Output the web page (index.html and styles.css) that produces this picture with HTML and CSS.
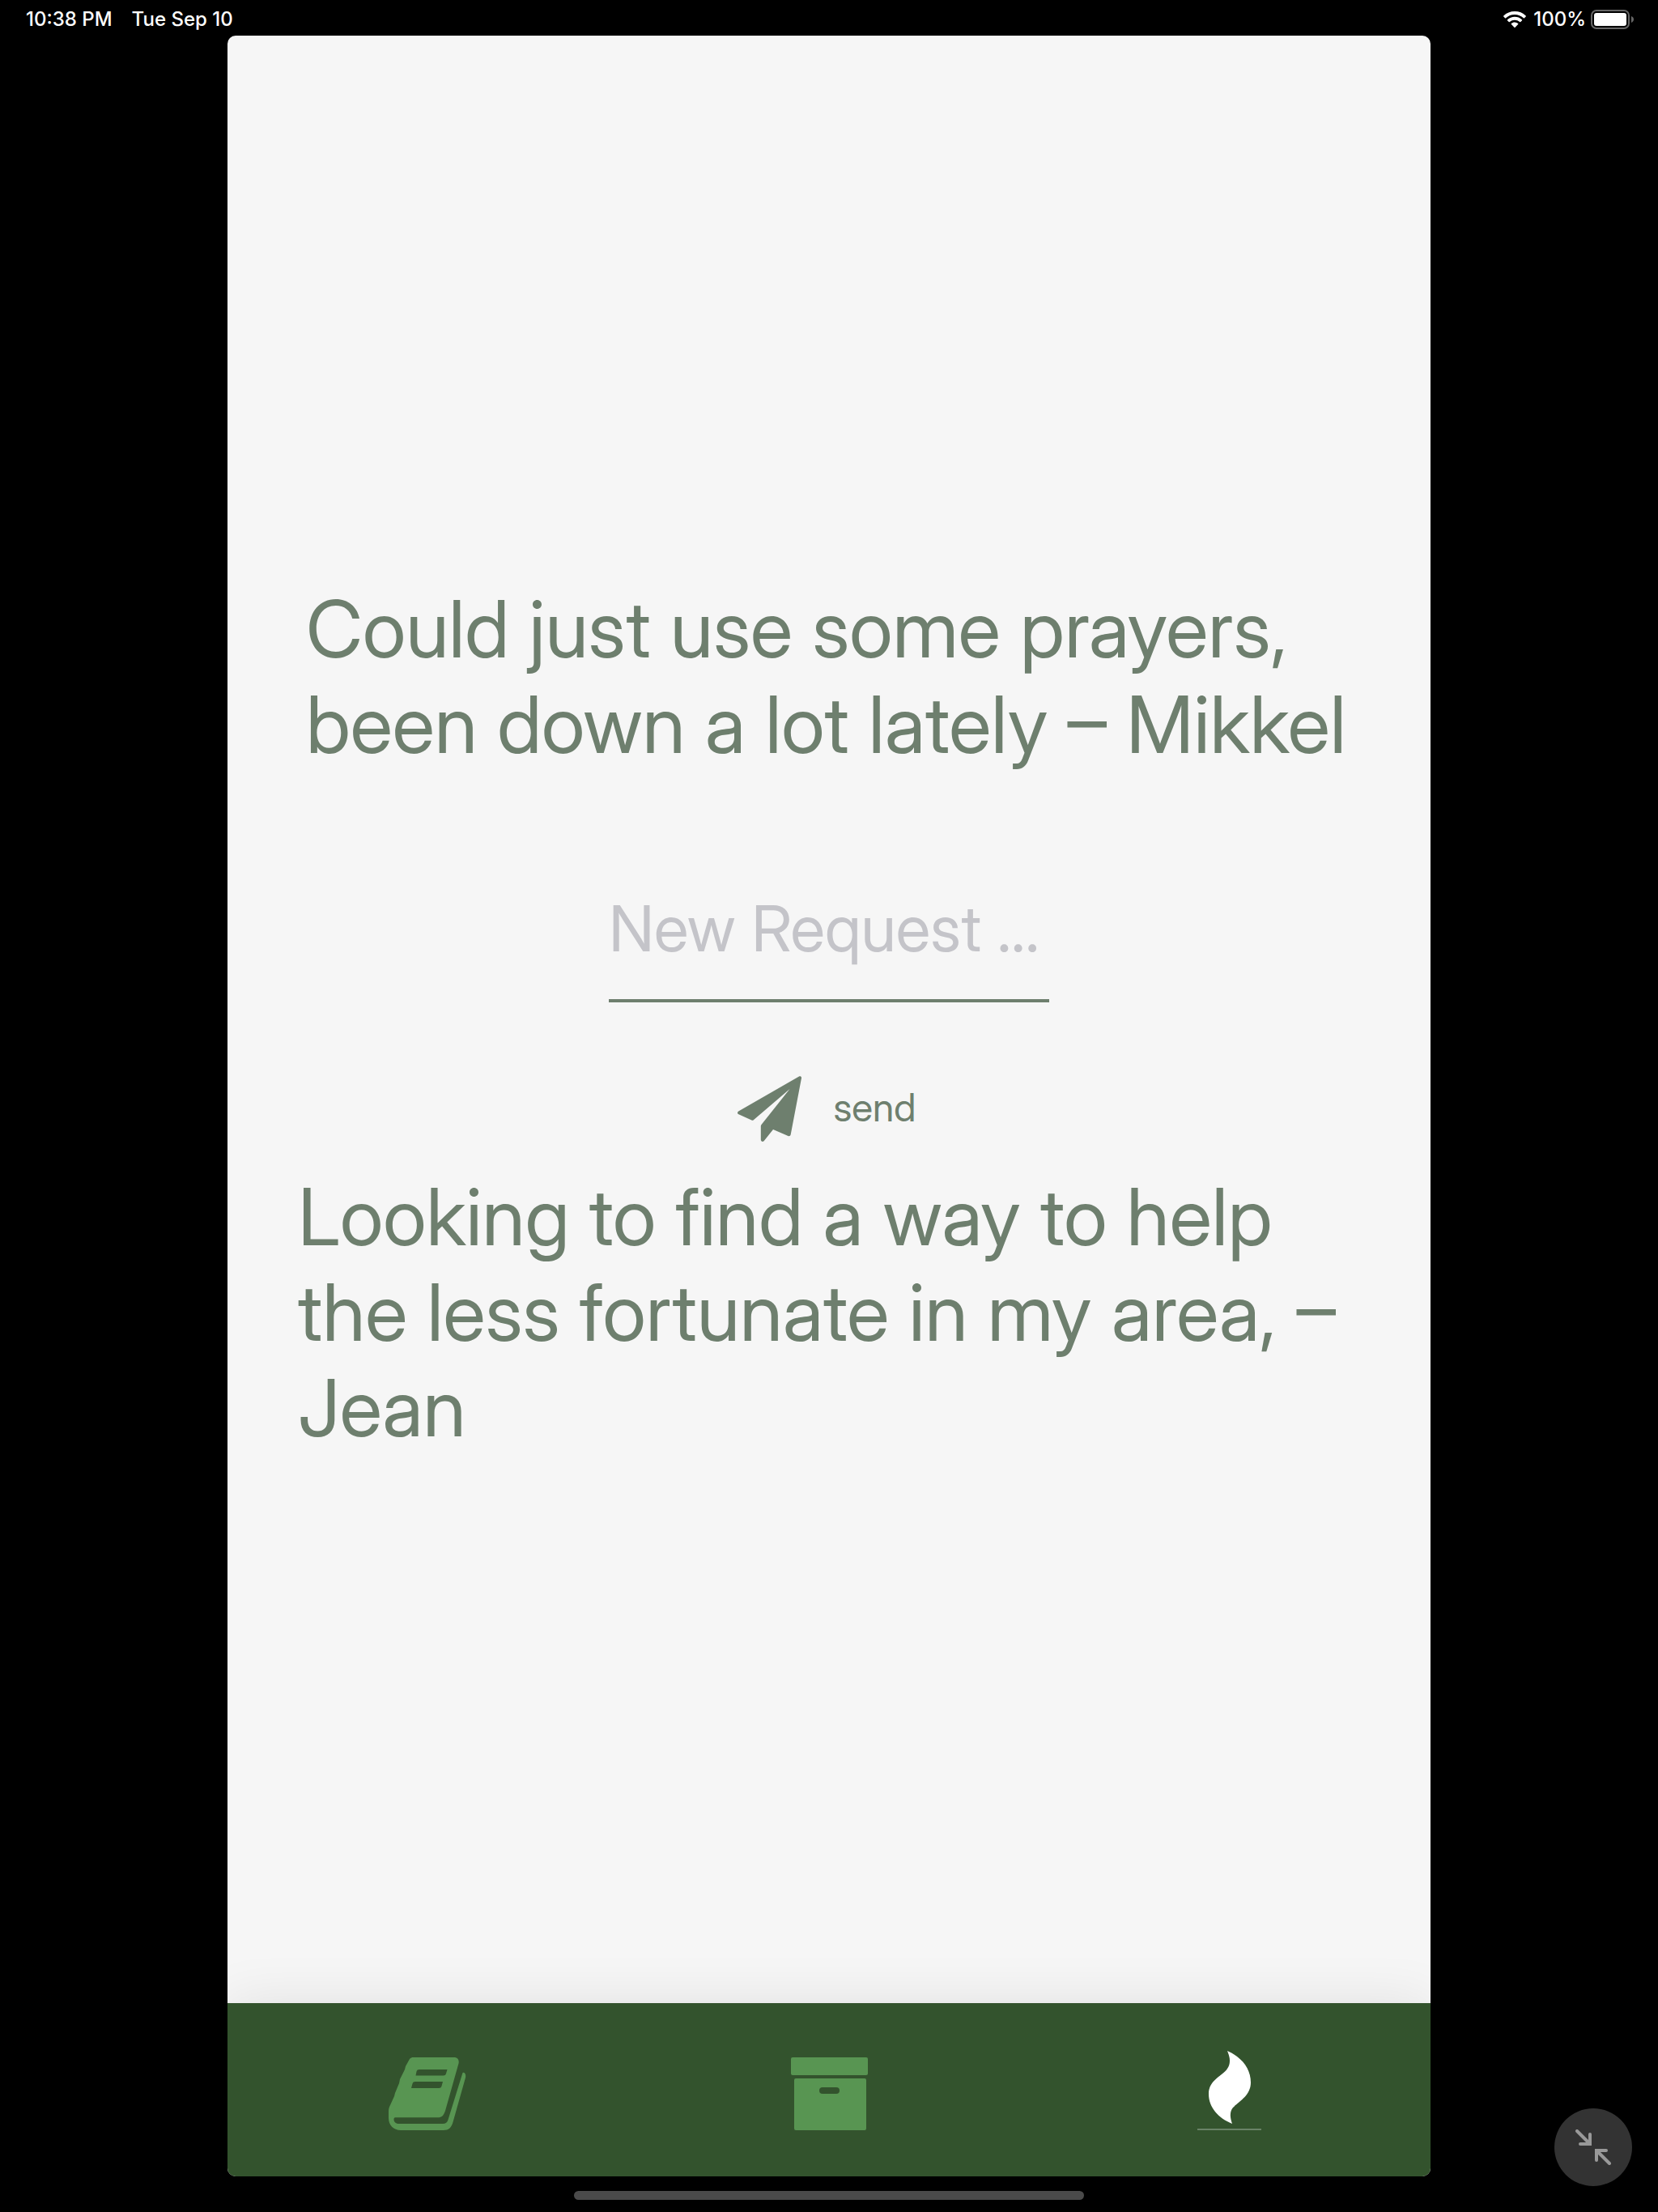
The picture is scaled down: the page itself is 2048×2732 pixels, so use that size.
FILE: index.html
```html
<!DOCTYPE html>
<html lang="en">
<head>
<meta charset="utf-8">
<meta name="viewport" content="width=device-width, initial-scale=1">
<title>Requests</title>
<link rel="stylesheet" href="styles.css">
</head>
<body>
<header class="status">
  <div class="status-group status-left">
    <time>10:38 PM</time>
    <time>Tue Sep 10</time>
  </div>
  <div class="status-group status-right">
    <svg class="wifi" viewBox="0 0 28 20" aria-hidden="true">
      <path d="M14 0C8.700 0 3.900 2 .300 5.400a.8.8 0 0 0 0 1.100l1.700 1.700a.8.8 0 0 0 1.100 0A15.800 15.800 0 0 1 14 3.900c4.200 0 8 1.600 10.900 4.300a.8.8 0 0 0 1.100 0l1.700-1.700a.8.8 0 0 0 0-1.100A19.900 19.900 0 0 0 14 0z"/>
      <path d="M14 6.800c-3.400 0-6.500 1.300-8.900 3.400a.8.8 0 0 0 0 1.200l1.600 1.600a.8.8 0 0 0 1.100 0 9.300 9.300 0 0 1 12.400 0 .8.8 0 0 0 1.100 0l1.600-1.600a.8.8 0 0 0 0-1.200A13.400 13.400 0 0 0 14 6.800z"/>
      <path d="M14 13.400c-1.600 0-3 .6-4.100 1.500a.8.8 0 0 0 0 1.200l3.500 3.600a.8.8 0 0 0 1.200 0l3.500-3.600a.8.8 0 0 0 0-1.200A6.500 6.500 0 0 0 14 13.400z"/>
    </svg>
    <span>100%</span>
    <svg class="battery" viewBox="0 0 53 24" aria-hidden="true">
      <rect x="1" y="1" width="46" height="22" rx="6" fill="none" stroke="#666" stroke-width="2"/>
      <rect x="4" y="4" width="40" height="16" rx="3"/>
      <path d="M50 8c2 .8 3 2.200 3 4s-1 3.200-3 4z" fill="#666"/>
    </svg>
  </div>
</header>

<div class="stage">
  <div class="app">
    <main class="feed">
      <p class="message message-first">Could just use some prayers, been down a lot lately – Mikkel</p>
      <form class="composer">
        <input class="request" type="text" placeholder="New Request ..." aria-label="New request">
        <button class="send" type="button">
          <svg class="send-icon" viewBox="0 0 79 81" aria-hidden="true">
            <path d="M76 .5L1.200 43.500c-1.600 1-1.600 3 .2 3.800l16 7.300c.9.4 1.700.3 2.400-.4L64.500 16 29.500 60c-.5.7-.7 1.300-.7 2v16.500c0 2.500 2.600 3.100 4 1.500L44 66l18.500 8c1.500.6 3-.2 3.200-1.800L79 2.500C79.200.5 77.500-.4 76 .5z"/>
          </svg>
          <span class="send-label">send</span>
        </button>
      </form>
      <p class="message">Looking to find a way to help the less fortunate in my area, – Jean</p>
    </main>

    <nav class="tabs" aria-label="Main">
      <a class="tab" href="#journal" aria-label="Journal">
        <svg class="tab-icon" viewBox="1 0 96 90" aria-hidden="true">
          <path fill-rule="evenodd" d="M30 0h51c4 0 6.500 3 5.500 7.500L70 66c-2 6-4.500 8.300-9 8.300H8c-2.500 0-2.500 7.700 5 7.700h54c3.500 0 5.500-1.500 6.500-5L91.500 19c2.500-1 4.300 2 3.500 6L79.500 80c-2 7-5.500 10-11.500 10H15C6 90 0 83.500 0 75V66c0-3 1-5 2-7l5-11 1-4 5-12 1-5 6-12 1-4 5-9c1-1 2-2 4-2zM38 15c-2 0-3 .8-3.500 2.500l-1 5h34c2 0 3-.8 3.500-2.500l1.500-5zM33 30c-2 0-3 .8-3.500 2.500L28 38h34c2 0 3-.8 3.500-2.500L67 30z"/>
        </svg>
      </a>
      <a class="tab" href="#archive" aria-label="Archive">
        <svg class="tab-icon" viewBox="0 0 96 90" aria-hidden="true">
          <rect x="1" y="0" width="95" height="22" rx="2"/>
          <path fill-rule="evenodd" d="M7 26h85q2 0 2 2v60q0 2-2 2H7q-2 0-2-2V28q0-2 2-2zm33 11a3.500 3.500 0 0 0 0 8h17a3.500 3.500 0 0 0 0-8z"/>
        </svg>
      </a>
      <a class="tab tab-current" href="#requests" aria-label="Requests" aria-current="page">
        <svg class="tab-icon" viewBox="0 0 82 98" aria-hidden="true">
          <path d="M38 0C56 8 67 22 67 39c0 16-14 23-22 31-4 5-4 11-1 20C27 83 15 70 15 53c0-17 17-22 23-31 4-6 4-13 0-22z"/>
          <rect x="1" y="96" width="79" height="2" fill="#6a8267"/>
        </svg>
      </a>
    </nav>
  </div>
</div>

<footer class="dock"><div class="home-indicator"></div></footer>

<button class="shrink" type="button" aria-label="Shrink app">
  <svg class="shrink-icon" viewBox="0 0 44 44" aria-hidden="true">
    <path d="M2 2l16 16M18 6v12H6M42 42L26 26M26 38V26h12"/>
  </svg>
</button>
</body>
</html>
```
FILE: styles.css
```css
* { box-sizing: border-box; }

body {
  margin: 0;
  min-height: 100vh;
  display: flex;
  flex-direction: column;
  background: #000;
  color: #fff;
  font-family: Inter, "Liberation Sans", sans-serif;
}

/* Status bar */
.status {
  height: 44px;
  padding: 4px 30px 0 32px;
  display: flex;
  justify-content: space-between;
  align-items: center;
  font-size: 24px;
  line-height: 40px;
  font-weight: 500;
}
.status-group { display: flex; align-items: center; }
.status-left { gap: 24px; }
.status-right { gap: 6px; }
.status svg { fill: #fff; display: block; }
.wifi { width: 28px; height: 20px; margin-right: 3px; }
.battery { width: 53px; height: 24px; }

/* App window */
.stage {
  flex: 1;
  display: flex;
  padding: 0 281px;
}
.app {
  flex: 1;
  display: flex;
  flex-direction: column;
  overflow: hidden;
  border-radius: 10px;
  background: #f6f6f6;
  color: #6e7f6e;
}
.feed {
  flex: 1;
  display: flex;
  flex-direction: column;
  justify-content: center;
  padding: 0 84px 2px;
  font-family: "Inter Display", Inter, "Liberation Sans", sans-serif;
}
.message {
  margin: 0;
  padding-left: 3px;
  font-size: 97px;
  line-height: 118px;
}
.message-first { padding-left: 13px; }

.composer {
  display: flex;
  flex-direction: column;
  align-items: center;
  padding: 144px 0 34px;
}
.request {
  width: 544px;
  padding: 0 0 40px;
  border: 0;
  border-bottom: 4px solid #6e7f6e;
  border-radius: 0;
  outline: 0;
  background: none;
  color: #6e7f6e;
  font-family: inherit;
  font-size: 79px;
  line-height: 96px;
}
.request::placeholder { color: #c4c4c9; opacity: 1; }
.send {
  display: flex;
  align-items: center;
  gap: 40px;
  margin: 91px 0 0;
  padding: 0 6px 0 0;
  border: 0;
  background: none;
  color: #6e7f6e;
  font-family: inherit;
  font-size: 48px;
  line-height: 76px;
}
.send-icon { width: 79px; height: 81px; fill: #6e7f6e; display: block; }
.send-label { padding-bottom: 4px; }

/* Tab bar */
.tabs {
  height: 214px;
  display: flex;
  background: #33532d;
  box-shadow: 0 0 64px rgba(0, 0, 0, 0.09);
}
.tab {
  flex: 1;
  display: flex;
  justify-content: center;
  align-items: flex-end;
  padding-bottom: 57px;
}
.tab-icon { width: 96px; display: block; fill: #589552; overflow: visible; }
.tab-current .tab-icon { width: 82px; fill: #fff; }

/* Home indicator */
.dock {
  height: 44px;
  display: flex;
  justify-content: center;
  align-items: flex-start;
  padding-top: 18px;
}
.home-indicator {
  width: 630px;
  height: 11px;
  border-radius: 6px;
  background: #4a4a4a;
}

/* Floating control over the page */
.shrink {
  position: fixed;
  right: 32px;
  bottom: 32px;
  width: 96px;
  height: 96px;
  display: flex;
  justify-content: center;
  align-items: center;
  padding: 0;
  border: 0;
  border-radius: 50%;
  background: #333;
}
.shrink-icon {
  width: 44px;
  height: 44px;
  fill: none;
  stroke: #999;
  stroke-width: 4;
  stroke-linecap: round;
  stroke-linejoin: miter;
}
```
